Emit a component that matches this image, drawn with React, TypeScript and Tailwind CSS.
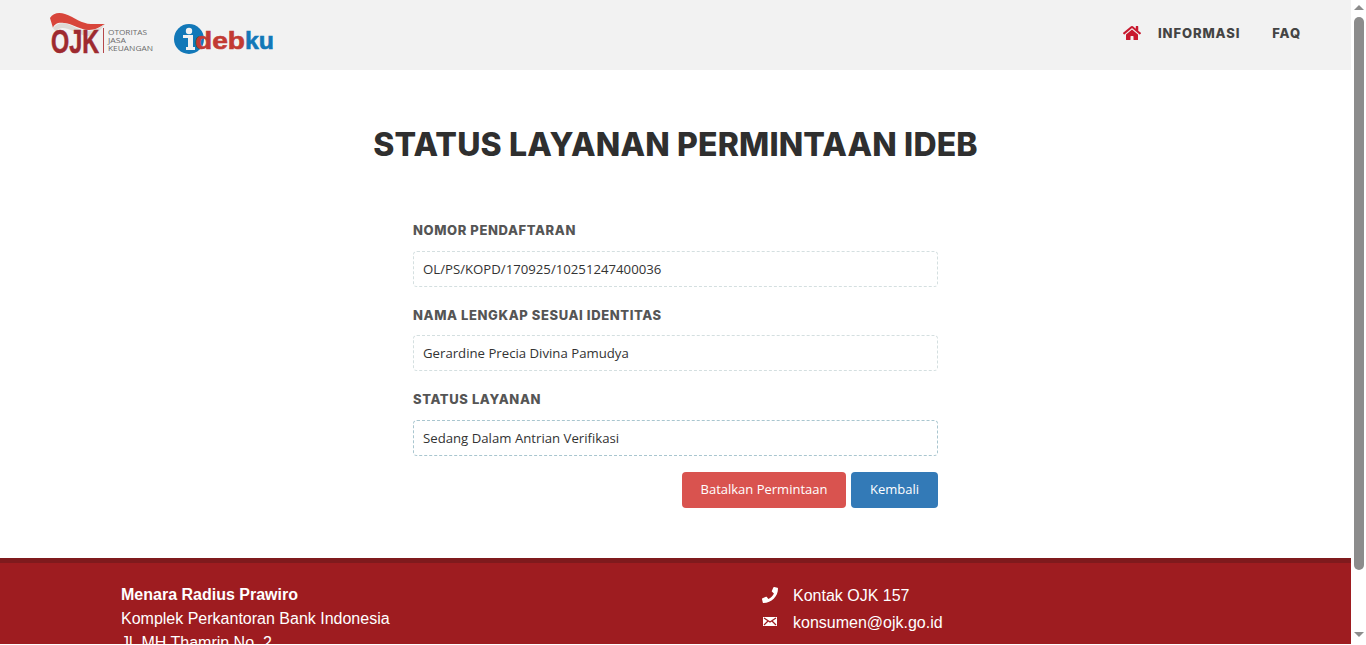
import React from "react";
import { FaHome, FaPhone } from "react-icons/fa";

function OjkLogo() {
  return (
    <svg width="106" height="44" viewBox="0 0 106 44" className="block overflow-visible">
      <path d="M0 7 C3 2 9 1 15 3 C24 6 32 13 41 13 C47 13 51 13 55 13 C50 16 45 19 39 19 C30 19 24 13 14 12 C8 11 4 13 3 17 Z" fill="#d8453b" />
      <path d="M3 17 C7 12 13 11 20 14 C27 17 32 20 39 20 C45 20 50 16 55 13 C49 21 45 25 39 25 C31 25 25 20 18 18 C12 16 8 17 6 21 Z" fill="#dedad7" />
      <text x="1" y="42" fontFamily="Liberation Sans" fontWeight="700" fontSize="34" fill="#9e2a2f" stroke="#9e2a2f" strokeWidth="0.6" textLength="48" lengthAdjust="spacingAndGlyphs">OJK</text>
      <rect x="53" y="17" width="1" height="25" fill="#b5474a" />
      <text x="58" y="24" fontFamily="Open Sans" fontSize="8" fill="#6b6b6b" textLength="39" lengthAdjust="spacingAndGlyphs">OTORITAS</text>
      <text x="58" y="32" fontFamily="Open Sans" fontSize="8" fill="#6b6b6b" textLength="18" lengthAdjust="spacingAndGlyphs">JASA</text>
      <text x="58" y="40" fontFamily="Open Sans" fontSize="8" fill="#6b6b6b" textLength="45" lengthAdjust="spacingAndGlyphs">KEUANGAN</text>
    </svg>
  );
}

function IdebkuLogo() {
  return (
    <svg width="102" height="32" viewBox="0 0 102 32" className="block overflow-visible">
      <circle cx="15" cy="15" r="15" fill="#1278b8" />
      <circle cx="15" cy="7" r="3.2" fill="#f2f2f2" />
      <path d="M9 11 H19 V23 H21 V26 H12 V23 H14 V14 H9 Z" fill="#f2f2f2" />
      <text x="21" y="25" fontFamily="Liberation Sans" fontWeight="700" fontSize="24" fill="#c23a33" stroke="#c23a33" strokeWidth="0.6" textLength="50" lengthAdjust="spacingAndGlyphs">deb</text>
      <text x="71" y="25" fontFamily="Liberation Sans" fontWeight="700" fontSize="24" fill="#1278b8" stroke="#1278b8" strokeWidth="0.6" textLength="29" lengthAdjust="spacingAndGlyphs">ku</text>
    </svg>
  );
}

function Field({ label, value, top, gap, border }: { label: string; value: string; top: string; gap: string; border: string }) {
  return (
    <div className={top}>
      <div className="font-['Inter',sans-serif] text-[13px] leading-[18px] font-extrabold tracking-[0.6px] text-[#555]">{label}</div>
      <div className={`${gap} h-9 rounded border border-dashed ${border} bg-white px-[9px] font-['Open_Sans',sans-serif] text-[13.2px] leading-[34px] text-[#333]`}>
        {value}
      </div>
    </div>
  );
}

export default function App() {
  return (
    <div className="flex h-[645px] w-full overflow-hidden bg-white">
      <div className="flex h-[644px] w-[1351px] shrink-0 flex-col overflow-hidden">
        <header className="flex h-[70px] shrink-0 items-start justify-between bg-[#f2f2f2] pl-[50px] pr-[50px]">
          <div className="flex items-start gap-[18px] pt-[11px]">
            <OjkLogo />
            <div className="pt-[13px]"><IdebkuLogo /></div>
          </div>
          <nav className="flex items-center pt-[24px] font-['Inter',sans-serif] text-[13px] font-extrabold leading-[18px] tracking-[0.9px] text-[#444]">
            <FaHome className="mr-[17px] text-[18px] text-[#c8192e]" />
            <span>INFORMASI</span>
            <span className="ml-[32px]">FAQ</span>
          </nav>
        </header>
        <main className="flex h-[488px] shrink-0 flex-col items-center">
          <h1 className="mt-[54px] font-['Inter',sans-serif] text-[32px] font-extrabold leading-[42px] tracking-[0.15px] whitespace-nowrap text-[#2f2f2f]">
            STATUS LAYANAN PERMINTAAN IDEB
          </h1>
          <form className="mt-[55px] w-[525px]">
            <Field label="NOMOR PENDAFTARAN" value="OL/PS/KOPD/170925/10251247400036" top="" gap="mt-3" border="border-[#d4dfe0]" />
            <Field label="NAMA LENGKAP SESUAI IDENTITAS" value="Gerardine Precia Divina Pamudya" top="mt-[19px]" gap="mt-[11px]" border="border-[#d4dfe0]" />
            <Field label="STATUS LAYANAN" value="Sedang Dalam Antrian Verifikasi" top="mt-[19px]" gap="mt-3" border="border-[#a9c6cf]" />
            <div className="mt-4 flex justify-end gap-[5px] font-['Open_Sans',sans-serif] text-[13px] text-white">
              <button type="button" className="h-9 w-[164px] rounded bg-[#d9534f]">Batalkan Permintaan</button>
              <button type="button" className="h-9 w-[87px] rounded bg-[#337ab7]">Kembali</button>
            </div>
          </form>
        </main>
        <footer className="flex h-[86px] shrink-0 border-t-[5px] border-[#7f1a1d] bg-[#9e1c20] font-['Liberation_Sans',sans-serif] text-base leading-6 text-white">
          <div className="w-[762px] shrink-0 pl-[121px] pt-[20px]">
            <div className="font-bold">Menara Radius Prawiro</div>
            <div>Komplek Perkantoran Bank Indonesia</div>
            <div>Jl. MH Thamrin No. 2</div>
          </div>
          <div className="pt-[21px]">
            <div className="flex h-6 items-center gap-[15px]">
              <FaPhone className="mb-[2px] w-4 text-[16px]" />
              <span>Kontak OJK 157</span>
            </div>
            <div className="mt-[3px] flex h-6 items-center gap-[15px]">
              <svg width="16" height="11" viewBox="0 0 16 11" className="mb-[4px] block">
                <rect x="1" y="1" width="14" height="9" fill="#fff" />
                <path d="M2 2 L8 6 L14 2 M2 9 L6 5 M14 9 L10 5" stroke="#9e1c20" strokeWidth="1.2" fill="none" />
              </svg>
              <span>konsumen@ojk.go.id</span>
            </div>
          </div>
        </footer>
      </div>
      <div className="flex h-[645px] w-[15px] shrink-0 flex-col items-center bg-white">
        <div className="mt-[5px] h-0 w-0 border-x-[5px] border-b-[5px] border-x-transparent border-b-[#8c8c8c]" />
        <div className="mt-[7px] h-[553px] w-[10px] rounded-full bg-[#8c8c8c]" />
        <div className="mt-[62px] h-0 w-0 border-x-[5px] border-t-[5px] border-x-transparent border-t-[#8c8c8c]" />
      </div>
    </div>
  );
}
